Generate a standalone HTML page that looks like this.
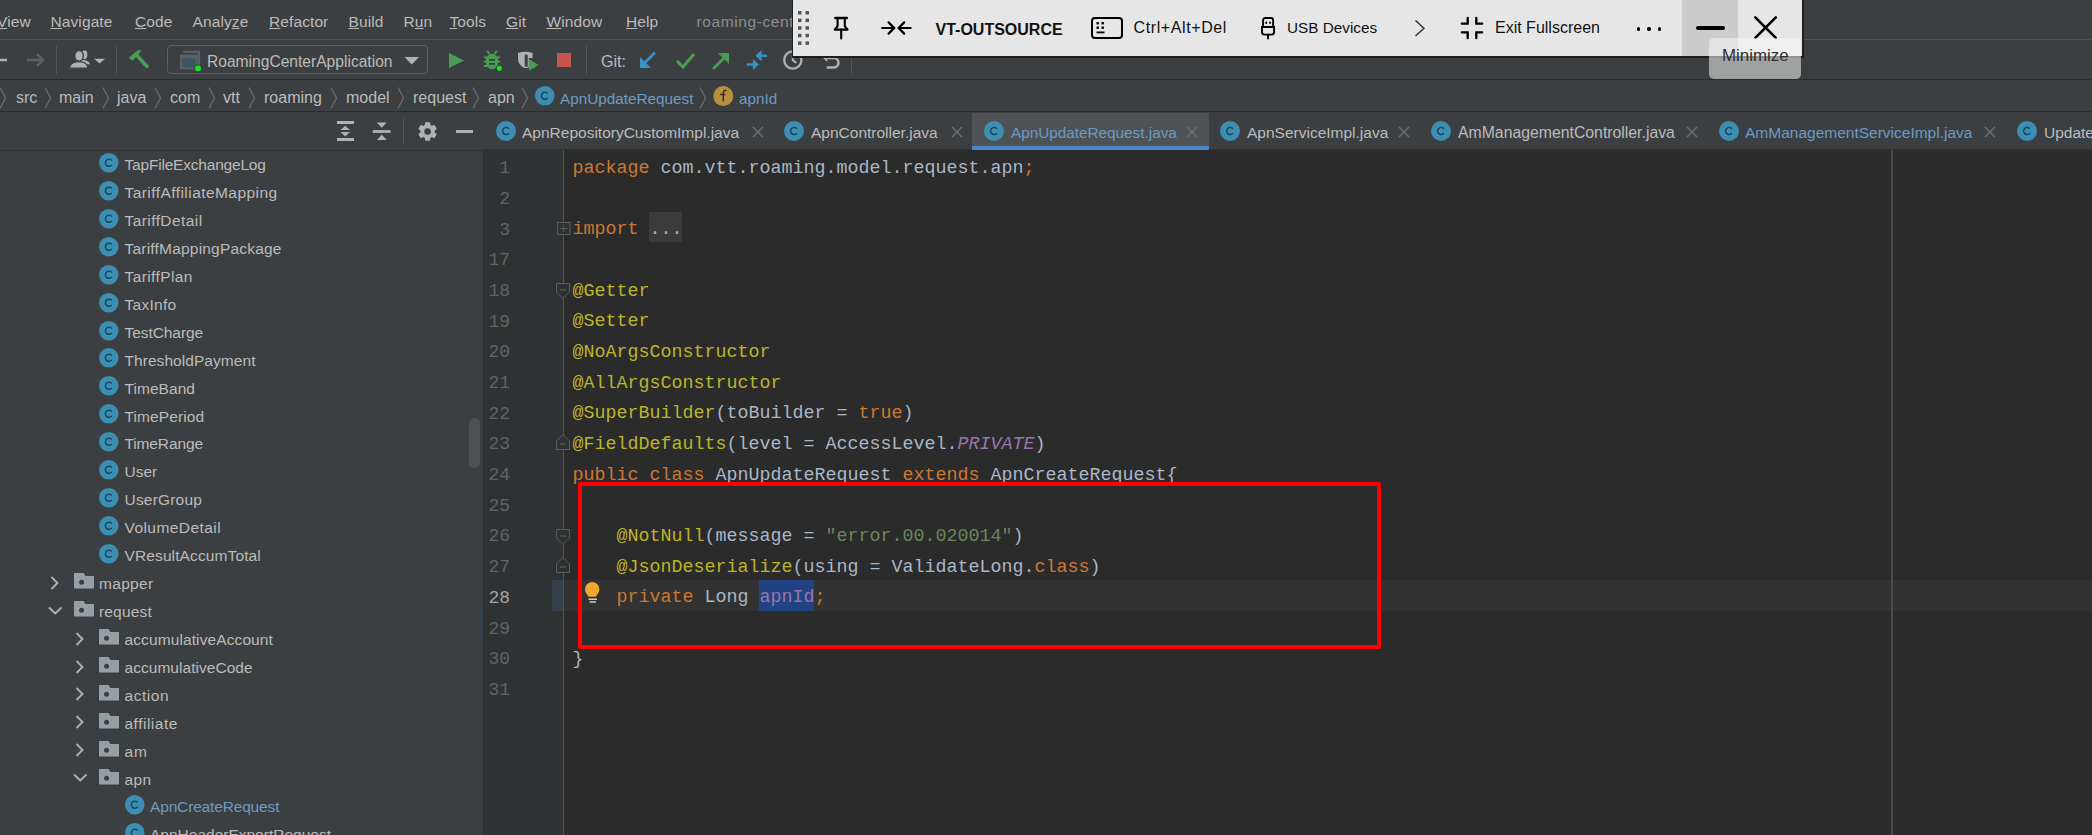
<!DOCTYPE html><html><head><meta charset="utf-8"><style>
html,body{margin:0;padding:0;width:2092px;height:835px;overflow:hidden;background:#3C3F41;}
body{position:relative;font-family:"Liberation Sans",sans-serif;font-variant-ligatures:none;}
.t{position:absolute;white-space:pre;line-height:1;}
.r{position:absolute;}
svg{position:absolute;overflow:visible;}
.code{position:absolute;font-family:"Liberation Mono",monospace;white-space:pre;font-size:18.33px;line-height:30.69px;color:#A9B7C6;}
.ln{position:absolute;font-family:"Liberation Mono",monospace;white-space:pre;font-size:18px;color:#606366;text-align:right;width:40px;}
.u{text-decoration:underline;text-underline-offset:0.5px;}
</style></head><body>
<div class="r" style="left:0px;top:0px;width:2092px;height:39px;background:#3C3F41;"></div>
<div class="r" style="left:0px;top:39px;width:2092px;height:1px;background:#515658;"></div>
<div class="r" style="left:0px;top:40px;width:2092px;height:39px;background:#3C3F41;"></div>
<div class="r" style="left:0px;top:79px;width:2092px;height:1px;background:#2B2B2B;"></div>
<div class="r" style="left:0px;top:80px;width:2092px;height:31px;background:#3C3F41;"></div>
<div class="r" style="left:0px;top:111px;width:2092px;height:1px;background:#2B2B2B;"></div>
<div class="r" style="left:0px;top:112px;width:483px;height:723px;background:#3C3F41;"></div>
<div class="r" style="left:0px;top:150px;width:483px;height:1px;background:#323232;"></div>
<div class="r" style="left:483px;top:112px;width:1609px;height:37px;background:#3C3F41;"></div>
<div class="r" style="left:483px;top:149px;width:1609px;height:1px;background:#323232;"></div>
<div class="r" style="left:483px;top:150px;width:1609px;height:685px;background:#2B2B2B;"></div>
<div class="r" style="left:483px;top:150px;width:80px;height:685px;background:#2F3233;"></div>
<div class="r" style="left:563px;top:150px;width:1px;height:685px;background:#555555;"></div>
<div class="t" style="left:-3px;top:13.58px;font-size:15.5px;color:#BBBBBB;letter-spacing:0.1px"><span class="u">V</span>iew</div>
<div class="t" style="left:50.5px;top:13.58px;font-size:15.5px;color:#BBBBBB;letter-spacing:0.1px"><span class="u">N</span>avigate</div>
<div class="t" style="left:135px;top:13.58px;font-size:15.5px;color:#BBBBBB;letter-spacing:0.1px"><span class="u">C</span>ode</div>
<div class="t" style="left:192.5px;top:13.58px;font-size:15.5px;color:#BBBBBB;letter-spacing:0.1px">Analy<span class="u">z</span>e</div>
<div class="t" style="left:269px;top:13.58px;font-size:15.5px;color:#BBBBBB;letter-spacing:0.1px"><span class="u">R</span>efactor</div>
<div class="t" style="left:348.5px;top:13.58px;font-size:15.5px;color:#BBBBBB;letter-spacing:0.1px"><span class="u">B</span>uild</div>
<div class="t" style="left:403.5px;top:13.58px;font-size:15.5px;color:#BBBBBB;letter-spacing:0.1px">R<span class="u">u</span>n</div>
<div class="t" style="left:449.5px;top:13.58px;font-size:15.5px;color:#BBBBBB;letter-spacing:0.1px"><span class="u">T</span>ools</div>
<div class="t" style="left:506px;top:13.58px;font-size:15.5px;color:#BBBBBB;letter-spacing:0.1px"><span class="u">G</span>it</div>
<div class="t" style="left:546.5px;top:13.58px;font-size:15.5px;color:#BBBBBB;letter-spacing:0.1px"><span class="u">W</span>indow</div>
<div class="t" style="left:626px;top:13.58px;font-size:15.5px;color:#BBBBBB;letter-spacing:0.1px"><span class="u">H</span>elp</div>
<div class="t" style="left:696.5px;top:13.58px;font-size:15.5px;color:#8E8E8E;letter-spacing:0.6px">roaming-center</div>
<svg style="left:0;top:50px" width="50" height="20"><path d="M-4 10 H7" stroke="#AFB1B3" stroke-width="2.5"/><path d="M27 10 H43 M37 4 L43 10 L37 16" stroke="#5E6264" stroke-width="2.5" fill="none"/></svg>
<div class="r" style="left:56px;top:46px;width:1px;height:28px;background:#515658;"></div>
<svg style="left:68px;top:50px" width="40" height="20"><ellipse cx="16.4" cy="4.8" rx="3" ry="4.2" fill="#AFB1B3"/><path d="M13 9.5 Q21 10 22 14.2 L13 14.5 Z" fill="#AFB1B3"/><ellipse cx="11" cy="5.8" rx="4.3" ry="5.3" fill="#AFB1B3" stroke="#3C3F41" stroke-width="1.4"/><path d="M1.5 18.2 Q2 13 8 11.8 H14 Q19.5 13 20 18.2 Z" fill="#AFB1B3" stroke="#3C3F41" stroke-width="1.2"/><path d="M26 8.7 L37.2 8.7 L31.6 13.6 Z" fill="#AFB1B3"/></svg>
<div class="r" style="left:116px;top:46px;width:1px;height:28px;background:#515658;"></div>
<svg style="left:126px;top:48px" width="26" height="24"><path d="M3 9.5 L11.5 2.5 L15.5 2 L14 4.5 L6.5 13 Z" fill="#499C54"/><path d="M10.5 7 L22 19.5" stroke="#499C54" stroke-width="3.6"/></svg>
<div class="r" style="left:167px;top:45px;width:261px;height:29px;border:1px solid #5E6060;border-radius:4px;box-sizing:border-box"></div>
<svg style="left:179px;top:49px" width="26" height="24"><path d="M4 2.8 H20 V16.5" stroke="#5A6063" stroke-width="2.2" fill="none"/><rect x="2" y="6.8" width="15.6" height="12.6" fill="#3E5662" stroke="#5A6063" stroke-width="2"/><rect x="1" y="5.8" width="17.6" height="3.6" fill="#5A6063"/><circle cx="19" cy="19.4" r="3.6" fill="#18E020" stroke="#2B2B2B" stroke-width="0.8"/></svg>
<div class="t" style="left:207px;top:54.29px;font-size:15.6px;color:#BBBBBB;">RoamingCenterApplication</div>
<svg style="left:404px;top:56px" width="16" height="10"><path d="M0.5 1 L15 1 L7.75 8.5 Z" fill="#AFB1B3"/></svg>
<svg style="left:448px;top:52px" width="18" height="18"><path d="M1 1 L16 8.5 L1 16 Z" fill="#499C54"/></svg>
<svg style="left:483px;top:50px" width="22" height="22"><path d="M4.2 0.8 L6.6 4 M13.8 0.8 L11.4 4" stroke="#499C54" stroke-width="2"/><ellipse cx="9" cy="11.6" rx="6.3" ry="7.8" fill="#499C54"/><path d="M0.8 7.4 H17.2 M0.8 11.7 H17.2 M0.8 16 H17.2" stroke="#499C54" stroke-width="1.8"/><path d="M6 9.8 H12 M6 13.8 H12" stroke="#3C3F41" stroke-width="1.7"/><circle cx="16.4" cy="18.3" r="3.1" fill="#18E020" stroke="#2B2B2B" stroke-width="0.8"/></svg>
<svg style="left:518px;top:51px" width="24" height="22"><path d="M0 2 Q7.3 -0.6 14.6 2 V7 H10.8 V16.5 L7.3 17.3 Q0 14.5 0 7.5 Z" fill="#AFB1B3"/><rect x="6.7" y="3.7" width="3" height="12" fill="#3C3F41"/><path d="M11 8 L20.7 13.9 L11 19.8 Z" fill="#499C54"/></svg>
<div class="r" style="left:557px;top:53px;width:14px;height:14px;background:#C75450;"></div>
<div class="r" style="left:586px;top:46px;width:1px;height:28px;background:#515658;"></div>
<div class="t" style="left:601px;top:53.96px;font-size:16px;color:#BBBBBB;">Git:</div>
<svg style="left:639px;top:51px" width="20" height="20"><path d="M16 1.5 L4 13.5" stroke="#3592C4" stroke-width="2.6"/><path d="M1 6 L1 17 L12 17 Z" fill="#3592C4"/></svg>
<svg style="left:675px;top:51px" width="22" height="20"><path d="M2 10 L8 16 L19 3" stroke="#499C54" stroke-width="3" fill="none"/></svg>
<svg style="left:711px;top:51px" width="20" height="20"><path d="M2 18 L13 7" stroke="#499C54" stroke-width="2.6"/><path d="M7 2 L18 2 L18 13 Z" fill="#499C54"/></svg>
<svg style="left:745px;top:49px" width="24" height="24"><path d="M10.5 6.8 L16.6 1 L16.6 12.4 Z M13.9 15.5 L7.9 10 L7.9 21 Z" fill="#3592C4"/><path d="M16 6.8 H22 M1.8 15.5 H8.5" stroke="#3592C4" stroke-width="2.6"/></svg>
<svg style="left:781px;top:48px" width="24" height="24"><circle cx="11.8" cy="12" r="8.6" stroke="#AFB1B3" stroke-width="2.3" fill="none"/><path d="M11.8 7.5 V12 L15.2 15" stroke="#AFB1B3" stroke-width="2" fill="none"/></svg>
<svg style="left:819px;top:48px" width="24" height="24"><path d="M7.7 10.1 H14.8 A4.65 4.65 0 0 1 14.8 19.4 H7.7" stroke="#AFB1B3" stroke-width="2.5" fill="none"/><path d="M2.5 8.6 L8.2 7 L8.2 14 Z" fill="#AFB1B3"/></svg>
<div class="r" style="left:851px;top:46px;width:1px;height:28px;background:#515658;"></div>
<svg style="left:-1px;top:86.5px" width="8" height="22"><path d="M1 0.5 L6.5 11 L1 21.5" stroke="#6B6E70" stroke-width="1.2" fill="none"/></svg>
<div class="t" style="left:16px;top:90.46px;font-size:16px;color:#BBBBBB;">src</div>
<svg style="left:44px;top:86.5px" width="8" height="22"><path d="M1 0.5 L6.5 11 L1 21.5" stroke="#6B6E70" stroke-width="1.2" fill="none"/></svg>
<div class="t" style="left:59px;top:90.46px;font-size:16px;color:#BBBBBB;">main</div>
<svg style="left:102px;top:86.5px" width="8" height="22"><path d="M1 0.5 L6.5 11 L1 21.5" stroke="#6B6E70" stroke-width="1.2" fill="none"/></svg>
<div class="t" style="left:117px;top:90.46px;font-size:16px;color:#BBBBBB;">java</div>
<svg style="left:154px;top:86.5px" width="8" height="22"><path d="M1 0.5 L6.5 11 L1 21.5" stroke="#6B6E70" stroke-width="1.2" fill="none"/></svg>
<div class="t" style="left:170px;top:90.46px;font-size:16px;color:#BBBBBB;">com</div>
<svg style="left:208px;top:86.5px" width="8" height="22"><path d="M1 0.5 L6.5 11 L1 21.5" stroke="#6B6E70" stroke-width="1.2" fill="none"/></svg>
<div class="t" style="left:223px;top:90.46px;font-size:16px;color:#BBBBBB;">vtt</div>
<svg style="left:248px;top:86.5px" width="8" height="22"><path d="M1 0.5 L6.5 11 L1 21.5" stroke="#6B6E70" stroke-width="1.2" fill="none"/></svg>
<div class="t" style="left:264px;top:90.46px;font-size:16px;color:#BBBBBB;">roaming</div>
<svg style="left:330px;top:86.5px" width="8" height="22"><path d="M1 0.5 L6.5 11 L1 21.5" stroke="#6B6E70" stroke-width="1.2" fill="none"/></svg>
<div class="t" style="left:346px;top:90.46px;font-size:16px;color:#BBBBBB;">model</div>
<svg style="left:397px;top:86.5px" width="8" height="22"><path d="M1 0.5 L6.5 11 L1 21.5" stroke="#6B6E70" stroke-width="1.2" fill="none"/></svg>
<div class="t" style="left:413px;top:90.46px;font-size:16px;color:#BBBBBB;">request</div>
<svg style="left:472px;top:86.5px" width="8" height="22"><path d="M1 0.5 L6.5 11 L1 21.5" stroke="#6B6E70" stroke-width="1.2" fill="none"/></svg>
<div class="t" style="left:488px;top:90.46px;font-size:16px;color:#BBBBBB;">apn</div>
<svg style="left:521px;top:86.5px" width="8" height="22"><path d="M1 0.5 L6.5 11 L1 21.5" stroke="#6B6E70" stroke-width="1.2" fill="none"/></svg>
<svg style="left:535.25px;top:86.25px" width="19.5" height="19.5"><circle cx="9.75" cy="9.75" r="9.75" fill="#3C8FB3"/><path d="M12.75 7.45 A3.6 3.6 0 1 0 12.75 12.05" stroke="#1C4559" stroke-width="1.45" fill="none"/></svg>
<div class="t" style="left:560px;top:91.05px;font-size:15.3px;color:#6A9BC4;">ApnUpdateRequest</div>
<svg style="left:699px;top:86.5px" width="8" height="22"><path d="M1 0.5 L6.5 11 L1 21.5" stroke="#6B6E70" stroke-width="1.2" fill="none"/></svg>
<svg style="left:713px;top:86px" width="21" height="21"><circle cx="10.3" cy="10.1" r="10" fill="#B98F3F"/><path d="M13.5 4.5 Q10.5 3.8 10.3 7 V15.5 M7.2 8.5 H12.5" stroke="#3B2F1E" stroke-width="1.5" fill="none"/></svg>
<div class="t" style="left:739px;top:91.05px;font-size:15.3px;color:#6A9BC4;">apnId</div>
<svg style="left:336px;top:120px" width="20" height="22"><path d="M1 2.5 H18 M1 19.5 H18" stroke="#AFB1B3" stroke-width="2.8"/><path d="M4.5 10 L9.2 5.8 L14 10 Z M4.5 12 L9.2 16.6 L14 12 Z" fill="#AFB1B3"/></svg>
<svg style="left:372px;top:120px" width="20" height="22"><path d="M0.8 11.5 H18.6" stroke="#AFB1B3" stroke-width="2.8"/><path d="M4.8 2.5 L9.8 7.7 L14.8 2.5 Z M4.8 20 L9.8 14.7 L14.8 20 Z" fill="#AFB1B3"/></svg>
<div class="r" style="left:403px;top:117px;width:1px;height:27px;background:#515658;"></div>
<svg style="left:417px;top:120.5px" width="21" height="21"><g transform="translate(10.6 10.5)" fill="#AFB1B3"><circle r="7.2"/><rect x="-2.6" y="-9.3" width="5.2" height="5" rx="0.8" transform="rotate(0)"/><rect x="-2.6" y="-9.3" width="5.2" height="5" rx="0.8" transform="rotate(60)"/><rect x="-2.6" y="-9.3" width="5.2" height="5" rx="0.8" transform="rotate(120)"/><rect x="-2.6" y="-9.3" width="5.2" height="5" rx="0.8" transform="rotate(180)"/><rect x="-2.6" y="-9.3" width="5.2" height="5" rx="0.8" transform="rotate(240)"/><rect x="-2.6" y="-9.3" width="5.2" height="5" rx="0.8" transform="rotate(300)"/><circle r="3.3" fill="#3C3F41"/></g></svg>
<div class="r" style="left:455.5px;top:130px;width:17.3px;height:3px;background:#AFB1B3;"></div>
<svg style="left:99.25px;top:153.05px" width="19.5" height="19.5"><circle cx="9.75" cy="9.75" r="9.75" fill="#3C8FB3"/><path d="M12.75 7.45 A3.6 3.6 0 1 0 12.75 12.05" stroke="#1C4559" stroke-width="1.45" fill="none"/></svg>
<div class="t" style="left:124.5px;top:157.28px;font-size:15.5px;color:#BBBBBB;letter-spacing:-0.2px">TapFileExchangeLog</div>
<svg style="left:99.25px;top:180.97000000000003px" width="19.5" height="19.5"><circle cx="9.75" cy="9.75" r="9.75" fill="#3C8FB3"/><path d="M12.75 7.45 A3.6 3.6 0 1 0 12.75 12.05" stroke="#1C4559" stroke-width="1.45" fill="none"/></svg>
<div class="t" style="left:124.5px;top:185.20px;font-size:15.5px;color:#BBBBBB;letter-spacing:0.443px">TariffAffiliateMapping</div>
<svg style="left:99.25px;top:208.89000000000001px" width="19.5" height="19.5"><circle cx="9.75" cy="9.75" r="9.75" fill="#3C8FB3"/><path d="M12.75 7.45 A3.6 3.6 0 1 0 12.75 12.05" stroke="#1C4559" stroke-width="1.45" fill="none"/></svg>
<div class="t" style="left:124.5px;top:213.12px;font-size:15.5px;color:#BBBBBB;letter-spacing:0.427px">TariffDetail</div>
<svg style="left:99.25px;top:236.81px" width="19.5" height="19.5"><circle cx="9.75" cy="9.75" r="9.75" fill="#3C8FB3"/><path d="M12.75 7.45 A3.6 3.6 0 1 0 12.75 12.05" stroke="#1C4559" stroke-width="1.45" fill="none"/></svg>
<div class="t" style="left:124.5px;top:241.04px;font-size:15.5px;color:#BBBBBB;letter-spacing:0.205px">TariffMappingPackage</div>
<svg style="left:99.25px;top:264.73px" width="19.5" height="19.5"><circle cx="9.75" cy="9.75" r="9.75" fill="#3C8FB3"/><path d="M12.75 7.45 A3.6 3.6 0 1 0 12.75 12.05" stroke="#1C4559" stroke-width="1.45" fill="none"/></svg>
<div class="t" style="left:124.5px;top:268.96px;font-size:15.5px;color:#BBBBBB;letter-spacing:0.4px">TariffPlan</div>
<svg style="left:99.25px;top:292.65000000000003px" width="19.5" height="19.5"><circle cx="9.75" cy="9.75" r="9.75" fill="#3C8FB3"/><path d="M12.75 7.45 A3.6 3.6 0 1 0 12.75 12.05" stroke="#1C4559" stroke-width="1.45" fill="none"/></svg>
<div class="t" style="left:124.5px;top:296.88px;font-size:15.5px;color:#BBBBBB;letter-spacing:0.283px">TaxInfo</div>
<svg style="left:99.25px;top:320.57px" width="19.5" height="19.5"><circle cx="9.75" cy="9.75" r="9.75" fill="#3C8FB3"/><path d="M12.75 7.45 A3.6 3.6 0 1 0 12.75 12.05" stroke="#1C4559" stroke-width="1.45" fill="none"/></svg>
<div class="t" style="left:124.5px;top:324.80px;font-size:15.5px;color:#BBBBBB;letter-spacing:-0.067px">TestCharge</div>
<svg style="left:99.25px;top:348.49px" width="19.5" height="19.5"><circle cx="9.75" cy="9.75" r="9.75" fill="#3C8FB3"/><path d="M12.75 7.45 A3.6 3.6 0 1 0 12.75 12.05" stroke="#1C4559" stroke-width="1.45" fill="none"/></svg>
<div class="t" style="left:124.5px;top:352.72px;font-size:15.5px;color:#BBBBBB;letter-spacing:0.06px">ThresholdPayment</div>
<svg style="left:99.25px;top:376.41px" width="19.5" height="19.5"><circle cx="9.75" cy="9.75" r="9.75" fill="#3C8FB3"/><path d="M12.75 7.45 A3.6 3.6 0 1 0 12.75 12.05" stroke="#1C4559" stroke-width="1.45" fill="none"/></svg>
<div class="t" style="left:124.5px;top:380.64px;font-size:15.5px;color:#BBBBBB;letter-spacing:0.057px">TimeBand</div>
<svg style="left:99.25px;top:404.33000000000004px" width="19.5" height="19.5"><circle cx="9.75" cy="9.75" r="9.75" fill="#3C8FB3"/><path d="M12.75 7.45 A3.6 3.6 0 1 0 12.75 12.05" stroke="#1C4559" stroke-width="1.45" fill="none"/></svg>
<div class="t" style="left:124.5px;top:408.56px;font-size:15.5px;color:#BBBBBB;letter-spacing:0.111px">TimePeriod</div>
<svg style="left:99.25px;top:432.25000000000006px" width="19.5" height="19.5"><circle cx="9.75" cy="9.75" r="9.75" fill="#3C8FB3"/><path d="M12.75 7.45 A3.6 3.6 0 1 0 12.75 12.05" stroke="#1C4559" stroke-width="1.45" fill="none"/></svg>
<div class="t" style="left:124.5px;top:436.48px;font-size:15.5px;color:#BBBBBB;letter-spacing:-0.125px">TimeRange</div>
<svg style="left:99.25px;top:460.17px" width="19.5" height="19.5"><circle cx="9.75" cy="9.75" r="9.75" fill="#3C8FB3"/><path d="M12.75 7.45 A3.6 3.6 0 1 0 12.75 12.05" stroke="#1C4559" stroke-width="1.45" fill="none"/></svg>
<div class="t" style="left:124.5px;top:464.40px;font-size:15.5px;color:#BBBBBB;letter-spacing:0.0px">User</div>
<svg style="left:99.25px;top:488.09000000000003px" width="19.5" height="19.5"><circle cx="9.75" cy="9.75" r="9.75" fill="#3C8FB3"/><path d="M12.75 7.45 A3.6 3.6 0 1 0 12.75 12.05" stroke="#1C4559" stroke-width="1.45" fill="none"/></svg>
<div class="t" style="left:124.5px;top:492.32px;font-size:15.5px;color:#BBBBBB;letter-spacing:0.188px">UserGroup</div>
<svg style="left:99.25px;top:516.01px" width="19.5" height="19.5"><circle cx="9.75" cy="9.75" r="9.75" fill="#3C8FB3"/><path d="M12.75 7.45 A3.6 3.6 0 1 0 12.75 12.05" stroke="#1C4559" stroke-width="1.45" fill="none"/></svg>
<div class="t" style="left:124.5px;top:520.24px;font-size:15.5px;color:#BBBBBB;letter-spacing:0.432px">VolumeDetail</div>
<svg style="left:99.25px;top:543.93px" width="19.5" height="19.5"><circle cx="9.75" cy="9.75" r="9.75" fill="#3C8FB3"/><path d="M12.75 7.45 A3.6 3.6 0 1 0 12.75 12.05" stroke="#1C4559" stroke-width="1.45" fill="none"/></svg>
<div class="t" style="left:124.5px;top:548.16px;font-size:15.5px;color:#BBBBBB;letter-spacing:0.119px">VResultAccumTotal</div>
<svg style="left:50px;top:575.8px" width="10" height="14"><path d="M1.5 1 L7.5 7 L1.5 13" stroke="#AFB1B3" stroke-width="1.9" fill="none"/></svg>
<svg style="left:74px;top:573.3px" width="21" height="17"><path d="M0 0 H9.5 L11.5 3 H20 V15.5 H0 Z" fill="#959FA6"/><circle cx="7.6" cy="9.3" r="2.5" fill="#3C3F41"/></svg>
<div class="t" style="left:99px;top:576.08px;font-size:15.5px;color:#BBBBBB;letter-spacing:0.32px">mapper</div>
<svg style="left:48px;top:605.72px" width="15" height="10"><path d="M1 1.5 L7.25 7.5 L13.5 1.5" stroke="#AFB1B3" stroke-width="1.9" fill="none"/></svg>
<svg style="left:74px;top:601.22px" width="21" height="17"><path d="M0 0 H9.5 L11.5 3 H20 V15.5 H0 Z" fill="#959FA6"/><circle cx="7.6" cy="9.3" r="2.5" fill="#3C3F41"/></svg>
<div class="t" style="left:99px;top:604.00px;font-size:15.5px;color:#BBBBBB;letter-spacing:0.167px">request</div>
<svg style="left:75px;top:631.6400000000001px" width="10" height="14"><path d="M1.5 1 L7.5 7 L1.5 13" stroke="#AFB1B3" stroke-width="1.9" fill="none"/></svg>
<svg style="left:99px;top:629.1400000000001px" width="21" height="17"><path d="M0 0 H9.5 L11.5 3 H20 V15.5 H0 Z" fill="#959FA6"/><circle cx="7.6" cy="9.3" r="2.5" fill="#3C3F41"/></svg>
<div class="t" style="left:124.5px;top:631.92px;font-size:15.5px;color:#BBBBBB;letter-spacing:0.106px">accumulativeAccount</div>
<svg style="left:75px;top:659.5600000000001px" width="10" height="14"><path d="M1.5 1 L7.5 7 L1.5 13" stroke="#AFB1B3" stroke-width="1.9" fill="none"/></svg>
<svg style="left:99px;top:657.0600000000001px" width="21" height="17"><path d="M0 0 H9.5 L11.5 3 H20 V15.5 H0 Z" fill="#959FA6"/><circle cx="7.6" cy="9.3" r="2.5" fill="#3C3F41"/></svg>
<div class="t" style="left:124.5px;top:659.84px;font-size:15.5px;color:#BBBBBB;letter-spacing:0.04px">accumulativeCode</div>
<svg style="left:75px;top:687.48px" width="10" height="14"><path d="M1.5 1 L7.5 7 L1.5 13" stroke="#AFB1B3" stroke-width="1.9" fill="none"/></svg>
<svg style="left:99px;top:684.98px" width="21" height="17"><path d="M0 0 H9.5 L11.5 3 H20 V15.5 H0 Z" fill="#959FA6"/><circle cx="7.6" cy="9.3" r="2.5" fill="#3C3F41"/></svg>
<div class="t" style="left:124.5px;top:687.76px;font-size:15.5px;color:#BBBBBB;letter-spacing:0.54px">action</div>
<svg style="left:75px;top:715.4000000000001px" width="10" height="14"><path d="M1.5 1 L7.5 7 L1.5 13" stroke="#AFB1B3" stroke-width="1.9" fill="none"/></svg>
<svg style="left:99px;top:712.9000000000001px" width="21" height="17"><path d="M0 0 H9.5 L11.5 3 H20 V15.5 H0 Z" fill="#959FA6"/><circle cx="7.6" cy="9.3" r="2.5" fill="#3C3F41"/></svg>
<div class="t" style="left:124.5px;top:715.68px;font-size:15.5px;color:#BBBBBB;letter-spacing:0.5px">affiliate</div>
<svg style="left:75px;top:743.32px" width="10" height="14"><path d="M1.5 1 L7.5 7 L1.5 13" stroke="#AFB1B3" stroke-width="1.9" fill="none"/></svg>
<svg style="left:99px;top:740.82px" width="21" height="17"><path d="M0 0 H9.5 L11.5 3 H20 V15.5 H0 Z" fill="#959FA6"/><circle cx="7.6" cy="9.3" r="2.5" fill="#3C3F41"/></svg>
<div class="t" style="left:124.5px;top:743.60px;font-size:15.5px;color:#BBBBBB;letter-spacing:1.0px">am</div>
<svg style="left:73px;top:773.24px" width="15" height="10"><path d="M1 1.5 L7.25 7.5 L13.5 1.5" stroke="#AFB1B3" stroke-width="1.9" fill="none"/></svg>
<svg style="left:99px;top:768.74px" width="21" height="17"><path d="M0 0 H9.5 L11.5 3 H20 V15.5 H0 Z" fill="#959FA6"/><circle cx="7.6" cy="9.3" r="2.5" fill="#3C3F41"/></svg>
<div class="t" style="left:124.5px;top:771.52px;font-size:15.5px;color:#BBBBBB;letter-spacing:0.4px">apn</div>
<svg style="left:124.75px;top:795.21px" width="19.5" height="19.5"><circle cx="9.75" cy="9.75" r="9.75" fill="#3C8FB3"/><path d="M12.75 7.45 A3.6 3.6 0 1 0 12.75 12.05" stroke="#1C4559" stroke-width="1.45" fill="none"/></svg>
<div class="t" style="left:150px;top:799.44px;font-size:15.5px;color:#6A9BC4;letter-spacing:-0.16px">ApnCreateRequest</div>
<svg style="left:124.75px;top:823.13px" width="19.5" height="19.5"><circle cx="9.75" cy="9.75" r="9.75" fill="#3C8FB3"/><path d="M12.75 7.45 A3.6 3.6 0 1 0 12.75 12.05" stroke="#1C4559" stroke-width="1.45" fill="none"/></svg>
<div class="t" style="left:150px;top:827.36px;font-size:15.5px;color:#BBBBBB;letter-spacing:0px">ApnHeaderExportRequest</div>
<div class="r" style="left:469px;top:418px;width:11px;height:50px;background:#4D5154;border-radius:5px"></div>
<div class="r" style="left:480px;top:607px;width:2px;height:28px;background:#2F4454;"></div>
<div class="r" style="left:972px;top:113px;width:237px;height:36px;background:#4E5254;"></div>
<div class="r" style="left:972px;top:146px;width:237px;height:4px;background:#4A88C7;"></div>
<svg style="left:496.0px;top:121.0px" width="20" height="20"><circle cx="10.0" cy="10.0" r="10.0" fill="#3C8FB3"/><path d="M13.00 7.70 A3.6 3.6 0 1 0 13.00 12.30" stroke="#1C4559" stroke-width="1.45" fill="none"/></svg>
<div class="t" style="left:522px;top:124.88px;font-size:15.5px;color:#BBBBBB;">ApnRepositoryCustomImpl.java</div>
<svg style="left:752px;top:125.5px" width="12" height="12"><path d="M1 1 L11 11 M11 1 L1 11" stroke="#6E7173" stroke-width="1.4"/></svg>
<svg style="left:784.0px;top:121.0px" width="20" height="20"><circle cx="10.0" cy="10.0" r="10.0" fill="#3C8FB3"/><path d="M13.00 7.70 A3.6 3.6 0 1 0 13.00 12.30" stroke="#1C4559" stroke-width="1.45" fill="none"/></svg>
<div class="t" style="left:811px;top:124.88px;font-size:15.5px;color:#BBBBBB;">ApnController.java</div>
<svg style="left:951px;top:125.5px" width="12" height="12"><path d="M1 1 L11 11 M11 1 L1 11" stroke="#6E7173" stroke-width="1.4"/></svg>
<svg style="left:984.0px;top:121.0px" width="20" height="20"><circle cx="10.0" cy="10.0" r="10.0" fill="#3C8FB3"/><path d="M13.00 7.70 A3.6 3.6 0 1 0 13.00 12.30" stroke="#1C4559" stroke-width="1.45" fill="none"/></svg>
<div class="t" style="left:1011px;top:125.05px;font-size:15.3px;color:#6A9BC4;">ApnUpdateRequest.java</div>
<svg style="left:1186px;top:125.5px" width="12" height="12"><path d="M1 1 L11 11 M11 1 L1 11" stroke="#6E7173" stroke-width="1.4"/></svg>
<svg style="left:1220.0px;top:121.0px" width="20" height="20"><circle cx="10.0" cy="10.0" r="10.0" fill="#3C8FB3"/><path d="M13.00 7.70 A3.6 3.6 0 1 0 13.00 12.30" stroke="#1C4559" stroke-width="1.45" fill="none"/></svg>
<div class="t" style="left:1247px;top:124.88px;font-size:15.5px;color:#BBBBBB;">ApnServiceImpl.java</div>
<svg style="left:1398px;top:125.5px" width="12" height="12"><path d="M1 1 L11 11 M11 1 L1 11" stroke="#6E7173" stroke-width="1.4"/></svg>
<svg style="left:1431.0px;top:121.0px" width="20" height="20"><circle cx="10.0" cy="10.0" r="10.0" fill="#3C8FB3"/><path d="M13.00 7.70 A3.6 3.6 0 1 0 13.00 12.30" stroke="#1C4559" stroke-width="1.45" fill="none"/></svg>
<div class="t" style="left:1458px;top:124.63px;font-size:15.8px;color:#BBBBBB;">AmManagementController.java</div>
<svg style="left:1686px;top:125.5px" width="12" height="12"><path d="M1 1 L11 11 M11 1 L1 11" stroke="#6E7173" stroke-width="1.4"/></svg>
<svg style="left:1718.5px;top:121.0px" width="20" height="20"><circle cx="10.0" cy="10.0" r="10.0" fill="#3C8FB3"/><path d="M13.00 7.70 A3.6 3.6 0 1 0 13.00 12.30" stroke="#1C4559" stroke-width="1.45" fill="none"/></svg>
<div class="t" style="left:1745px;top:124.88px;font-size:15.5px;color:#6A9BC4;">AmManagementServiceImpl.java</div>
<svg style="left:1984px;top:125.5px" width="12" height="12"><path d="M1 1 L11 11 M11 1 L1 11" stroke="#6E7173" stroke-width="1.4"/></svg>
<svg style="left:2017.0px;top:121.0px" width="20" height="20"><circle cx="10.0" cy="10.0" r="10.0" fill="#3C8FB3"/><path d="M13.00 7.70 A3.6 3.6 0 1 0 13.00 12.30" stroke="#1C4559" stroke-width="1.45" fill="none"/></svg>
<div class="t" style="left:2044px;top:124.88px;font-size:15.5px;color:#BBBBBB;">UpdateRequest.java</div>
<div class="r" style="left:564px;top:579.96px;width:1528px;height:30.69px;background:#323232;"></div>
<div class="r" style="left:483px;top:579.96px;width:80px;height:30.69px;background:#2F3233;"></div>
<div class="r" style="left:552px;top:579.96px;width:11px;height:30.69px;background:#33414D;"></div>
<div class="r" style="left:649px;top:212.18px;width:33px;height:30.19px;background:#3B3B3B;"></div>
<div class="r" style="left:758.5px;top:580.26px;width:55px;height:30.39px;background:#214283;"></div>
<div class="r" style="left:1891px;top:150px;width:1.5px;height:685px;background:#4A4A4A;"></div>
<div class="ln" style="left:470px;top:153.20px;line-height:30.69px;color:#606366;">1</div>
<div class="ln" style="left:470px;top:183.89px;line-height:30.69px;color:#606366;">2</div>
<div class="ln" style="left:470px;top:214.58px;line-height:30.69px;color:#606366;">3</div>
<div class="ln" style="left:470px;top:245.27px;line-height:30.69px;color:#606366;">17</div>
<div class="ln" style="left:470px;top:275.96px;line-height:30.69px;color:#606366;">18</div>
<div class="ln" style="left:470px;top:306.65px;line-height:30.69px;color:#606366;">19</div>
<div class="ln" style="left:470px;top:337.34px;line-height:30.69px;color:#606366;">20</div>
<div class="ln" style="left:470px;top:368.03px;line-height:30.69px;color:#606366;">21</div>
<div class="ln" style="left:470px;top:398.72px;line-height:30.69px;color:#606366;">22</div>
<div class="ln" style="left:470px;top:429.41px;line-height:30.69px;color:#606366;">23</div>
<div class="ln" style="left:470px;top:460.10px;line-height:30.69px;color:#606366;">24</div>
<div class="ln" style="left:470px;top:490.79px;line-height:30.69px;color:#606366;">25</div>
<div class="ln" style="left:470px;top:521.48px;line-height:30.69px;color:#606366;">26</div>
<div class="ln" style="left:470px;top:552.17px;line-height:30.69px;color:#606366;">27</div>
<div class="ln" style="left:470px;top:582.86px;line-height:30.69px;color:#A4A3A3;">28</div>
<div class="ln" style="left:470px;top:613.55px;line-height:30.69px;color:#606366;">29</div>
<div class="ln" style="left:470px;top:644.24px;line-height:30.69px;color:#606366;">30</div>
<div class="ln" style="left:470px;top:674.93px;line-height:30.69px;color:#606366;">31</div>
<div class="code" style="left:572.5px;top:153.80px"><span style="color:#CC7832;">package</span> com.vtt.roaming.model.request.apn<span style="color:#CC7832;">;</span>

<span style="color:#CC7832;">import</span> ...

<span style="color:#BBB529;">@Getter</span>
<span style="color:#BBB529;">@Setter</span>
<span style="color:#BBB529;">@NoArgsConstructor</span>
<span style="color:#BBB529;">@AllArgsConstructor</span>
<span style="color:#BBB529;">@SuperBuilder</span>(toBuilder = <span style="color:#CC7832;">true</span>)
<span style="color:#BBB529;">@FieldDefaults</span>(level = AccessLevel.<span style="color:#9876AA;font-style:italic">PRIVATE</span>)
<span style="color:#CC7832;">public class</span> ApnUpdateRequest <span style="color:#CC7832;">extends</span> ApnCreateRequest{

    <span style="color:#BBB529;">@NotNull</span>(message = <span style="color:#6A8759;">"error.00.020014"</span>)
    <span style="color:#BBB529;">@JsonDeserialize</span>(using = ValidateLong.<span style="color:#CC7832;">class</span>)
    <span style="color:#CC7832;">private</span> Long <span style="color:#9876AA;">apnId</span><span style="color:#CC7832;">;</span>

}
</div>
<svg style="left:557px;top:222px" width="14" height="14"><rect x="0.5" y="0.5" width="12.5" height="12" fill="#2F3233" stroke="#5A5D5F"/><path d="M3 6.5 H10.5 M6.75 2.8 V10.2" stroke="#5A5D5F"/></svg>
<svg style="left:556px;top:283.06px" width="15" height="17"><path d="M0.5 0.5 H13.5 V9 L7 15.5 L0.5 9 Z" fill="#2F3233" stroke="#5A5D5F"/><path d="M4 7 H10" stroke="#5A5D5F" stroke-width="1.2"/></svg>
<svg style="left:556px;top:433.01000000000005px" width="15" height="17"><path d="M0.5 16.5 H13.5 V8 L7 1.5 L0.5 8 Z" fill="#2F3233" stroke="#5A5D5F"/><path d="M4 11 H10" stroke="#5A5D5F" stroke-width="1.2"/></svg>
<svg style="left:556px;top:528.58px" width="15" height="17"><path d="M0.5 0.5 H13.5 V9 L7 15.5 L0.5 9 Z" fill="#2F3233" stroke="#5A5D5F"/><path d="M4 7 H10" stroke="#5A5D5F" stroke-width="1.2"/></svg>
<svg style="left:556px;top:555.77px" width="15" height="17"><path d="M0.5 16.5 H13.5 V8 L7 1.5 L0.5 8 Z" fill="#2F3233" stroke="#5A5D5F"/><path d="M4 11 H10" stroke="#5A5D5F" stroke-width="1.2"/></svg>
<svg style="left:584.5px;top:581.5px" width="16" height="21"><path d="M2 12.2 A7.2 7.2 0 1 1 12.4 12.2 L11 14.8 H3.4 Z" fill="#F0A732"/><path d="M3.5 17.2 H12 M4.6 19.9 H10.9" stroke="#CFCFCF" stroke-width="1.5"/></svg>
<div class="r" style="left:578px;top:482px;width:803px;height:167px;border:4.5px solid #FF0000;box-sizing:border-box;border-radius:2px"></div>
<div class="r" style="left:793px;top:0px;width:1009px;height:56px;background:#E6E6E6;"></div>
<div class="r" style="left:793px;top:56px;width:1010px;height:1.5px;background:#1E1E1E;"></div>
<div class="r" style="left:1802px;top:0px;width:2px;height:57.5px;background:#1E1E1E;"></div>
<div class="r" style="left:792px;top:0px;width:1px;height:57.5px;background:#1E1E1E;"></div>
<div class="r" style="left:1682px;top:0px;width:56px;height:56px;background:#CCCCCC;"></div>
<svg style="left:798px;top:11px" width="12" height="35"><rect x="0" y="0" width="3.5" height="3.5" fill="#555"/><rect x="0" y="7.6" width="3.5" height="3.5" fill="#555"/><rect x="0" y="15.2" width="3.5" height="3.5" fill="#555"/><rect x="0" y="22.8" width="3.5" height="3.5" fill="#555"/><rect x="0" y="30.4" width="3.5" height="3.5" fill="#555"/><rect x="7.5" y="0" width="3.5" height="3.5" fill="#555"/><rect x="7.5" y="7.6" width="3.5" height="3.5" fill="#555"/><rect x="7.5" y="15.2" width="3.5" height="3.5" fill="#555"/><rect x="7.5" y="22.8" width="3.5" height="3.5" fill="#555"/><rect x="7.5" y="30.4" width="3.5" height="3.5" fill="#555"/></svg>
<svg style="left:833px;top:16px" width="17" height="24"><path d="M2.3 2 H13.8" stroke="#000" stroke-width="2.4" stroke-linecap="round"/><path d="M4.6 2.5 V10.2 L1.8 13.6 H14.6 L11.8 10.2 V2.5" stroke="#000" stroke-width="2.1" fill="none" stroke-linejoin="round"/><path d="M8.2 13.6 V22.5" stroke="#000" stroke-width="2.1" stroke-linecap="round"/></svg>
<svg style="left:881px;top:21px" width="32" height="14"><path d="M1.2 7 H13.2 M7.6 1.4 L13.2 7 L7.6 12.6 M29.6 7 H17.6 M23.2 1.4 L17.6 7 L23.2 12.6" stroke="#000" stroke-width="2.2" fill="none" stroke-linecap="round"/></svg>
<div class="t" style="left:935.5px;top:21.76px;font-size:16px;color:#111;font-weight:bold">VT-OUTSOURCE</div>
<svg style="left:1091px;top:17px" width="33" height="23"><rect x="1" y="1" width="30" height="20" rx="3" stroke="#000" stroke-width="2" fill="none"/><rect x="5.5" y="5" width="2.4" height="2.4" fill="#000"/><rect x="10.5" y="5" width="2.4" height="2.4" fill="#000"/><rect x="5.5" y="9.5" width="2.4" height="2.4" fill="#000"/><rect x="10.5" y="9.5" width="2.4" height="2.4" fill="#000"/><rect x="5.5" y="14.5" width="8" height="1.8" fill="#000"/></svg>
<div class="t" style="left:1133.5px;top:19.96px;font-size:16px;color:#111;letter-spacing:0.6px">Ctrl+Alt+Del</div>
<svg style="left:1260px;top:16px" width="17" height="24"><path d="M3.1 10.5 V4.2 A2.2 2.2 0 0 1 5.3 2 H10.9 A2.2 2.2 0 0 1 13.1 4.2 V10.5" stroke="#000" stroke-width="1.9" fill="none"/><path d="M2 11 H14.1 V16 A2.6 2.6 0 0 1 11.5 18.6 H4.6 A2.6 2.6 0 0 1 2 16 Z" stroke="#000" stroke-width="1.9" fill="none"/><rect x="5.4" y="5.4" width="1.7" height="2.6" rx="0.8" fill="#000"/><rect x="9.2" y="5.4" width="1.7" height="2.6" rx="0.8" fill="#000"/><path d="M8.05 18.6 V22.5" stroke="#000" stroke-width="1.9" stroke-linecap="round"/></svg>
<div class="t" style="left:1287px;top:20.05px;font-size:15.3px;color:#111;">USB Devices</div>
<svg style="left:1415px;top:19.5px" width="11" height="17"><path d="M0.5 0.5 L9 8.25 L0.5 16" stroke="#333" stroke-width="1.5" fill="none"/></svg>
<svg style="left:1461px;top:17px" width="23" height="23"><path d="M6.7 0.8 V6.7 H0.8 M15.3 0.8 V6.7 H21.2 M6.7 21.2 V15.3 H0.8 M15.3 21.2 V15.3 H21.2" stroke="#000" stroke-width="2.3" fill="none" stroke-linecap="round"/></svg>
<div class="t" style="left:1495px;top:19.76px;font-size:16px;color:#111;">Exit Fullscreen</div>
<div class="r" style="left:1636.7px;top:27px;width:3.6px;height:3.6px;border-radius:50%;background:#000"></div>
<div class="r" style="left:1647.2px;top:27px;width:3.6px;height:3.6px;border-radius:50%;background:#000"></div>
<div class="r" style="left:1657.7px;top:27px;width:3.6px;height:3.6px;border-radius:50%;background:#000"></div>
<div class="r" style="left:1696px;top:26px;width:29px;height:4px;background:#000;border-radius:2px"></div>
<svg style="left:1754px;top:16px" width="24" height="24"><path d="M1.3 1.3 L21.8 21.8 M21.8 1.3 L1.3 21.8" stroke="#000" stroke-width="2.6" stroke-linecap="round"/></svg>
<div class="r" style="left:1709px;top:38px;width:92px;height:41px;background:rgba(245,245,245,0.54);border-radius:5px"></div>
<div class="t" style="left:1722px;top:48.19px;font-size:16.9px;color:#2E2E2E;">Minimize</div>
</body></html>
